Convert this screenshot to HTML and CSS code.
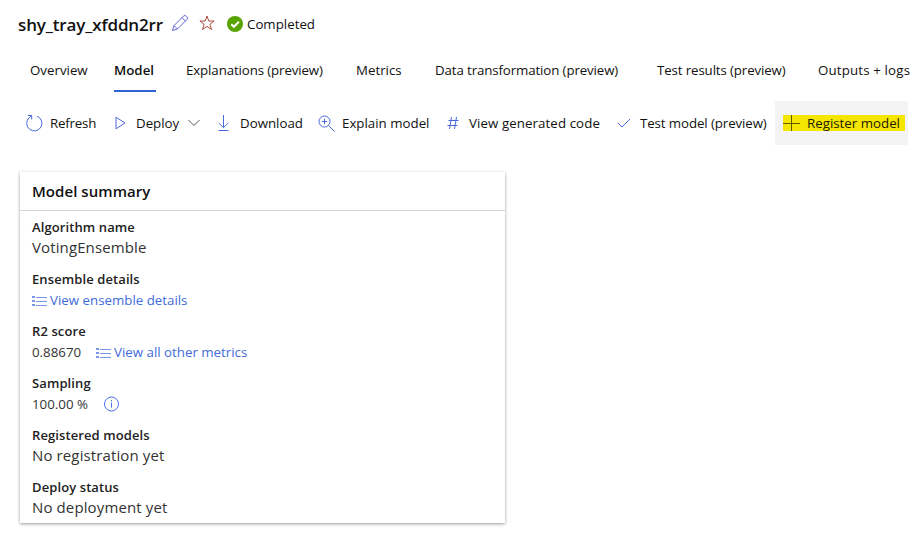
FILE: index.html
```html
<!DOCTYPE html>
<html lang="en">
<head>
<meta charset="utf-8">
<title>shy_tray_xfddn2rr</title>
<link rel="stylesheet" href="styles.css">
</head>
<body>
<header class="page-header">
  <h1 class="title">shy_tray_xfddn2rr</h1>
  <svg class="pencil" width="18" height="18" viewBox="0 0 18 18"><path d="M1.500 16.500 3 11.600 12.400 2.200a2 2 0 0 1 2.900 0l.5.5a2 2 0 0 1 0 2.900L6.400 15ZM3 11.600 6.400 15M11 3.600 14.400 7"/></svg>
  <svg class="star" width="16" height="16" viewBox="0 0 16 16"><path d="m8 1 1.800 5h5.300l-4.200 3.300 1.600 5.200L8 11.400l-4.500 3.100 1.600-5.200L.9 6h5.300Z"/></svg>
  <svg class="done" width="16" height="16" viewBox="0 0 16 16"><circle cx="8" cy="8" r="8"/><path d="m4.300 8.200 2.600 2.600 5-5"/></svg>
  <span class="status">Completed</span>
</header>
<nav class="tabs">
  <a class="tab">Overview</a>
  <a class="tab tab-active">Model</a>
  <a class="tab tight">Explanations (preview)</a>
  <a class="tab">Metrics</a>
  <a class="tab tight">Data transformation (preview)</a>
  <a class="tab tight">Test results (preview)</a>
  <a class="tab wide">Outputs + logs</a>
</nav>
<div class="toolbar">
  <div class="command refresh"><svg width="17" height="18" viewBox="0 0 17 18"><path d="M11 2.200A7.600 7.600 0 1 1 3.200 3.700L5.500 1.700M1.800 1.500H5.700V5.500"/></svg><span>Refresh</span></div>
  <div class="command deploy"><svg width="12" height="14" viewBox="0 0 12 14"><path d="M1 1.200v11.600L10 7Z"/></svg><span>Deploy</span><svg class="chevron" width="12" height="8" viewBox="0 0 12 8"><path d="m.5 1 5.500 5.500L11.500 1"/></svg></div>
  <div class="command download"><svg width="11" height="17" viewBox="0 0 11 17"><path d="M5.500 0v12.500M1 8.200l4.500 4.500L10 8.200M.5 15.500h10"/></svg><span>Download</span></div>
  <div class="command explain"><svg width="17" height="17" viewBox="0 0 17 17"><circle cx="6.500" cy="6.500" r="5.500"/><path d="m10.500 10.500 6 6M3.800 6.500h5.400M6.500 3.800v5.400"/></svg><span>Explain model</span></div>
  <div class="command code"><svg width="12" height="14" viewBox="0 0 12 14"><path d="M4.500 1 2.500 13M9.500 1l-2 12M1.500 4.500h10M.5 9.500h10"/></svg><span>View generated code</span></div>
  <div class="command test"><svg width="14" height="10" viewBox="0 0 14 10"><path d="m1 5 4 4 8-8"/></svg><span>Test model (preview)</span></div>
  <div class="command register"><div class="highlight"><svg width="17" height="17" viewBox="0 0 17 17"><path d="M8.500 0v16M0 8.500h17"/></svg><span>Register model</span></div></div>
</div>
<main class="card">
  <h2 class="card-title">Model summary</h2>
  <dl class="details">
    <div class="field"><dt>Algorithm name</dt><dd class="large">VotingEnsemble</dd></div>
    <div class="field"><dt>Ensemble details</dt><dd><a class="link"><svg width="15" height="12" viewBox="0 0 15 12"><path d="M4 2.500h11M4 6.500h11M4 10.500h11"/><path class="dots" d="M0 2h3M0 6h3M0 10h3"/></svg><span>View ensemble details</span></a></dd></div>
    <div class="field"><dt>R2 score</dt><dd><span class="score">0.88670</span><a class="link"><svg width="15" height="12" viewBox="0 0 15 12"><path d="M4 2.500h11M4 6.500h11M4 10.500h11"/><path class="dots" d="M0 2h3M0 6h3M0 10h3"/></svg><span>View all other metrics</span></a></dd></div>
    <div class="field"><dt>Sampling</dt><dd><span class="percent">100.00 %</span><svg class="info" width="17" height="16" viewBox="0 0 17 16"><circle cx="8.500" cy="8" r="7"/><path d="M8.500 6.700v5M8.500 4v1.400"/></svg></dd></div>
    <div class="field"><dt>Registered models</dt><dd class="large">No registration yet</dd></div>
    <div class="field"><dt>Deploy status</dt><dd class="large">No deployment yet</dd></div>
  </dl>
</main>
</body>
</html>
```
FILE: styles.css
```css
* { box-sizing: border-box; }
body {
  margin: 0;
  width: 915px;
  height: 553px;
  overflow: hidden;
  background: #fff;
  color: #111;
  font-family: "Open Sans", "Noto Sans", sans-serif;
  font-size: 13.3px;
  line-height: 20px;
}
svg { display: block; flex: none; fill: none; stroke: #4a68dc; stroke-width: 1; }
h1, h2, dl, dd { margin: 0; }
.page-header { display: flex; height: 48px; padding-left: 18px; white-space: nowrap; }
.title { width: 153px; margin-top: 13px; font-size: 17px; font-weight: 600; line-height: 24px; letter-spacing: -.15px; }
.pencil { margin-top: 14px; stroke: #6264d8; }
.star { margin: 15px 0 0 10px; stroke: #a84b3c; }
.done { margin: 16px 0 0 12px; fill: #57a300; stroke: none; }
.done path { fill: none; stroke: #fff; stroke-width: 2; }
.status { margin: 14px 0 0 4px; }
.tabs { display: grid; grid-template-columns: 84px 72px 170px 79px 222px 161px 97px; height: 53px; padding-left: 30px; white-space: nowrap; }
.tab { padding-top: 12px; }
.tight { letter-spacing: -.12px; }
.wide { letter-spacing: .15px; }
.tab-active { width: 42px; height: 44px; border-bottom: 2px solid #2f63d7; font-weight: 600; }
.toolbar { display: grid; grid-template-columns: 89px 103px 100px 129px 170px 158px 133px; height: 44px; padding-left: 26px; white-space: nowrap; }
.command { display: flex; align-items: center; }
.refresh span { margin-left: 7px; letter-spacing: -.2px; }
.deploy span { width: 52px; margin-left: 9px; }
.chevron { stroke: #555; }
.download span { margin-left: 11px; }
.explain span { margin-left: 7px; }
.code span { margin-left: 10px; letter-spacing: .08px; }
.test span { margin-left: 9px; letter-spacing: -.1px; }
.register { padding: 0 3px 0 8px; background: #f3f3f3; }
.highlight { display: flex; align-items: center; width: 122px; height: 16px; background: #f5e600; color: #222000; }
.highlight svg { stroke: #605b00; }
.highlight span { margin-left: 7px; }
.card { width: 485px; height: 351px; margin: 27px 0 0 20px; background: #fff; box-shadow: 0 1px 3px rgba(0, 0, 0, .4); }
.card-title { height: 39px; padding: 9px 12px; border-bottom: 1px solid #d5d5d5; font-size: 15px; font-weight: 600; line-height: 20px; letter-spacing: .05px; }
.details { display: grid; grid-template-rows: repeat(6, 52px); padding: 6px 12px 0; }
.field dt { height: 20px; color: #222; font-size: 13px; font-weight: 600; letter-spacing: .1px; }
.field dd { display: flex; align-items: center; height: 21px; color: #333; white-space: nowrap; }
.field .large { height: 19px; font-size: 15px; letter-spacing: .12px; }
.link { display: flex; align-items: center; color: #3f6bdb; }
.link svg { margin: 2px 3px 0 0; stroke: #7896e6; }
.link .dots { stroke-width: 2; }
.score { width: 64px; }
.percent { width: 71px; }
.info { stroke: #4671df; }
```
